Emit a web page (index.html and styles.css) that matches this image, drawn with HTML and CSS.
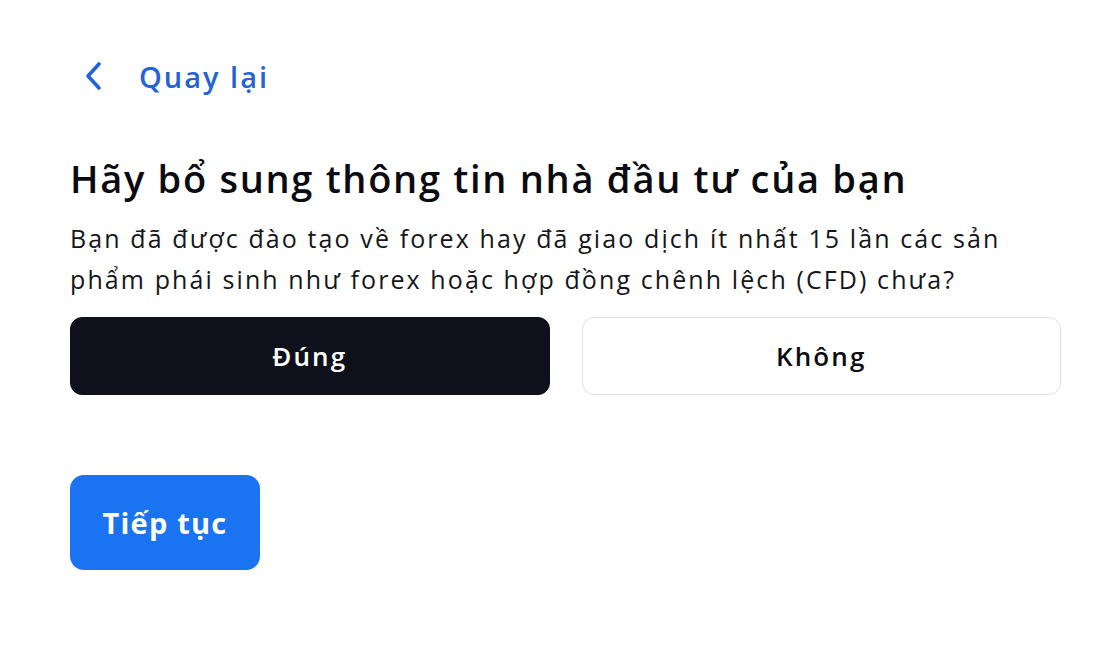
FILE: index.html
```html
<!DOCTYPE html>
<html lang="vi">
<head>
<meta charset="utf-8">
<title>Thông tin nhà đầu tư</title>
<link rel="stylesheet" href="styles.css">
</head>
<body>
<main class="page">
  <a class="back" href="#">
    <svg class="back-icon" viewBox="0 0 20 30" width="20" height="30" aria-hidden="true">
      <path d="M16 3 L5 15 L16 27" fill="none" stroke="currentColor" stroke-width="3.6" stroke-linecap="round" stroke-linejoin="round"/>
    </svg>
    <span class="back-text">Quay lại</span>
  </a>
  <h1 class="title">Hãy bổ sung thông tin nhà đầu tư của bạn</h1>
  <p class="question">Bạn đã được đào tạo về forex hay đã giao dịch ít nhất 15 lần các sản phẩm phái sinh như forex hoặc hợp đồng chênh lệch (CFD) chưa?</p>
  <div class="choices">
    <button class="choice choice-active">Đúng</button>
    <button class="choice">Không</button>
  </div>
  <button class="next">Tiếp tục</button>
</main>
</body>
</html>
```
FILE: styles.css
```css
* { box-sizing: border-box; }
html, body { margin: 0; background: #ffffff; }
body {
  font-family: "Open Sans", "DejaVu Sans", sans-serif;
  color: #0c0d12;
}
.page {
  width: 1100px;
  padding: 56px 39px 0 70px;
  display: flex;
  flex-direction: column;
  align-items: flex-start;
}
.back {
  display: flex;
  align-items: center;
  gap: 36px;
  color: #2462d8;
  text-decoration: none;
  margin-left: 13px;
  height: 40px;
}
.back-icon { display: block; }
.back-text {
  font-size: 29px;
  font-weight: 600;
  letter-spacing: 2px;
}
.title {
  margin: 58px 0 0 0;
  font-size: 38px;
  font-weight: 600;
  line-height: 48px;
  letter-spacing: 1.7px;
  color: #0a0b10;
}
.question {
  margin: 16px 0 0 0;
  font-size: 25px;
  line-height: 41px;
  font-weight: 400;
  letter-spacing: 2.1px;
  color: #15161b;
  max-width: 965px;
}
.choices {
  margin-top: 17px;
  width: 991px;
  display: grid;
  grid-template-columns: 1fr 1fr;
  gap: 32px;
}
.choice {
  height: 78px;
  border-radius: 12px;
  border: 1px solid #dde2ea;
  background: #ffffff;
  font-family: inherit;
  font-size: 26px;
  font-weight: 600;
  letter-spacing: 2.1px;
  color: #0c0d12;
}
.choice-active {
  background: #0e111b;
  border-color: #0e111b;
  color: #ffffff;
}
.next {
  margin-top: 80px;
  width: 190px;
  height: 95px;
  border: none;
  border-radius: 14px;
  background: #1a73f0;
  color: #ffffff;
  font-family: inherit;
  font-size: 29px;
  font-weight: 700;
  letter-spacing: 1.2px;
}
```
